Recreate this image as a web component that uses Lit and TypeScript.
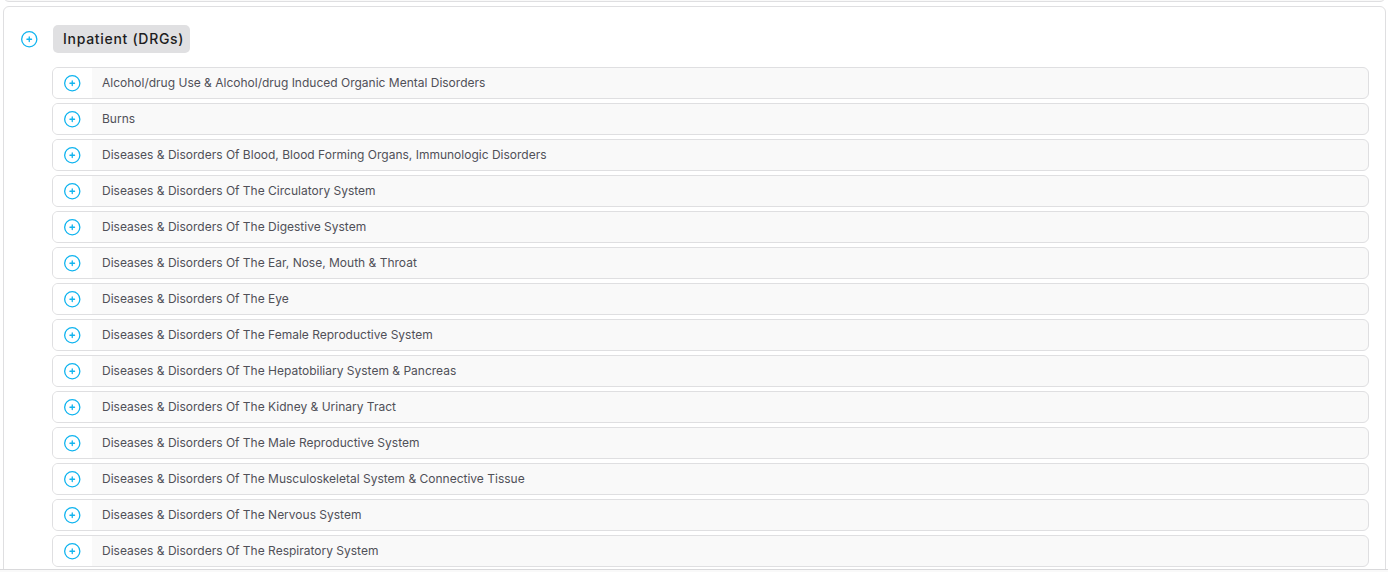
import { LitElement, html, css } from 'lit';
import { customElement, property } from 'lit/decorators.js';

@customElement('plus-icon')
export class PlusIcon extends LitElement {

  static styles = css`
    :host {
      display: block;
      width: 17px;
      height: 17px;
    }

    svg {
      display: block;
      fill: none;
      stroke: #10b4ef;
      stroke-width: 1.3;
      stroke-linecap: round;
    }
  `;

  render() {
    return html`
      <svg width="17" height="17" viewBox="0.25 0.25 17 17">
        <circle cx="8.5" cy="8.5" r="7.6"></circle>
        <path d="M8.5 6.2v4.6M6.2 8.5h4.6"></path>
      </svg>`;
  }
}

@customElement('category-row')
export class CategoryRow extends LitElement {

  @property() label = '';

  static styles = css`
    :host {
      display: flex;
      box-sizing: border-box;
      height: 32px;
      overflow: hidden;
      border: 1px solid #dfdfe1;
      border-radius: 6px;
      background: #f9f9f9;
    }

    .toggle {
      box-sizing: border-box;
      width: 39px;
      padding: 7px 0 0 11px;
      background: #ffffff;
    }

    .label {
      padding-left: 10px;
      font-size: 12px;
      line-height: 29px;
      font-weight: 400;
      color: #505058;
      white-space: nowrap;
    }
  `;

  render() {
    return html`
      <div class="toggle"><plus-icon></plus-icon></div>
      <div class="label">${this.label}</div>`;
  }
}

@customElement('app-root')
export class AppRoot extends LitElement {

  categories = [
    'Alcohol/drug Use & Alcohol/drug Induced Organic Mental Disorders',
    'Burns',
    'Diseases & Disorders Of Blood, Blood Forming Organs, Immunologic Disorders',
    'Diseases & Disorders Of The Circulatory System',
    'Diseases & Disorders Of The Digestive System',
    'Diseases & Disorders Of The Ear, Nose, Mouth & Throat',
    'Diseases & Disorders Of The Eye',
    'Diseases & Disorders Of The Female Reproductive System',
    'Diseases & Disorders Of The Hepatobiliary System & Pancreas',
    'Diseases & Disorders Of The Kidney & Urinary Tract',
    'Diseases & Disorders Of The Male Reproductive System',
    'Diseases & Disorders Of The Musculoskeletal System & Connective Tissue',
    'Diseases & Disorders Of The Nervous System',
    'Diseases & Disorders Of The Respiratory System',
  ];

  static styles = css`
    :host {
      display: flex;
      flex-direction: column;
      box-sizing: border-box;
      height: 572px;
      overflow: hidden;
      background: #ffffff;
      font-family: Inter, "Liberation Sans", sans-serif;
    }

    .content {
      display: flex;
      flex-direction: column;
      flex: 1;
      min-height: 0;
      padding: 0 2px 0 3px;
      overflow: hidden;
    }

    /* the panel above is scrolled away up to its bottom edge */
    .previous {
      flex: none;
      box-sizing: border-box;
      height: 12px;
      margin-top: -10px;
      border: 1px solid #dfdfe1;
      border-radius: 6px;
      background: #f9f9f9;
    }

    .panel {
      flex: none;
      margin-top: 4px;
      padding: 18px 16px 18px 17px;
      border: 1px solid #dfdfe1;
      border-radius: 6px;
    }

    .header {
      display: flex;
      align-items: flex-start;
      gap: 15px;
      height: 28px;
    }

    .header plus-icon {
      margin-top: 6px;
    }

    .title {
      box-sizing: border-box;
      width: 137px;
      padding-left: 10px;
      border-radius: 5px;
      background: #e0e0e2;
      font-size: 14px;
      line-height: 28px;
      letter-spacing: 0.7px;
      font-weight: 500;
      color: #1c1c20;
      white-space: nowrap;
    }

    .list {
      display: flex;
      flex-direction: column;
      gap: 4px;
      margin-top: 14px;
      padding-left: 31px;
    }

    .footer {
      flex: none;
      height: 2px;
      border-top: 1px solid #d9d9db;
      background: #f9f9f9;
    }
  `;

  render() {
    return html`
      <div class="content">
        <div class="previous"></div>
        <div class="panel">
          <div class="header">
            <plus-icon></plus-icon>
            <div class="title">Inpatient (DRGs)</div>
          </div>
          <div class="list">
            ${this.categories.map(name => html`<category-row .label="${name}"></category-row>`)}
          </div>
        </div>
      </div>
      <div class="footer"></div>`;
  }
}
